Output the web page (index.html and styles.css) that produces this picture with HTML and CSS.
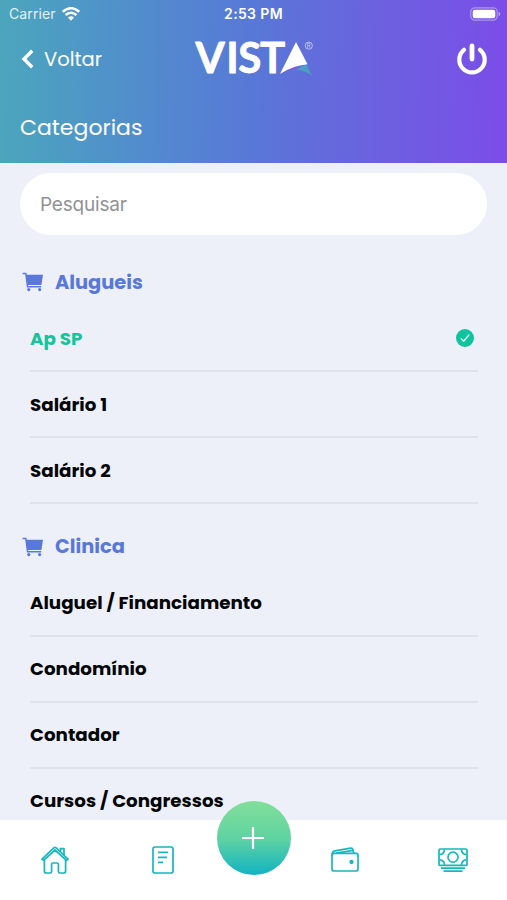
FILE: index.html
```
<!DOCTYPE html>
<html lang="pt-BR">
<head>
    <meta charset="UTF-8">
    <meta name="viewport" content="width=device-width, initial-scale=1.0">
    <title>Categorias</title>
    <link rel="stylesheet" href="styles.css">
</head>
<body>
    <svg width="0" height="0" class="sprite">
        <symbol id="cart" viewBox="0 0 22 20">
            <path d="M0.6 1.5H3.8L5.6 14.8H19.2" fill="none" stroke="currentColor" stroke-width="1.5"/>
            <path d="M4.2 2.8H21L19.4 13H5.6z" fill="currentColor"/>
            <circle cx="6.8" cy="17.6" r="1.6" fill="currentColor"/>
            <circle cx="17.6" cy="17.6" r="1.6" fill="currentColor"/>
        </symbol>
    </svg>

    <div class="app">
        <header class="header">
            <div class="status-bar">
                <div class="carrier">
                    <span class="carrier-name">Carrier</span>
                    <svg class="wifi" width="18" height="14" viewBox="0 0 18 14" fill="none" stroke="#fff" stroke-width="2.5">
                        <path d="M0.8 4.8Q9-2.4 17.2 4.8"/>
                        <path d="M3.6 8Q9 3.4 14.4 8"/>
                        <path d="M6 10.6Q9 8 12 10.6L9 13.7z" fill="#fff" stroke="none"/>
                    </svg>
                </div>
                <span class="time">2:53 PM</span>
                <svg class="battery" width="31" height="14" viewBox="0 0 31 14">
                    <rect x="0.8" y="0.8" width="26.4" height="12.4" rx="4" fill="none" stroke="#fff" stroke-opacity="0.4" stroke-width="1.2"/>
                    <rect x="2.7" y="2.7" width="22.6" height="8.6" rx="2.2" fill="#fff"/>
                    <path d="M28.6 4.8Q30.4 5.6 30.4 7T28.6 9.2z" fill="#fff" fill-opacity="0.5"/>
                </svg>
            </div>
            <div class="nav-bar">
                <a class="back">
                    <svg width="13" height="20" viewBox="0 0 13 20" fill="none" stroke="#fff" stroke-width="3.4">
                        <path d="M11.2 1.8L3 10L11.2 18.2"/>
                    </svg>
                    <span class="back-label">Voltar</span>
                </a>
                <svg class="logo" width="122" height="38" viewBox="0 0 122 38">
                    <text class="logo-text" x="2.6 33.2 45.2 67" y="33.4">VIST</text>
                    <path d="M113 24L119.5 36.5Q113 30.5 104 29.5Z" fill="#4c9fc4"/>
                    <path d="M88 34.5Q96 27.5 107 28L97 25Z" fill="#8b55df"/>
                    <path d="M103 2L114.5 24.2Q99 25.6 87 34Z" fill="#fff"/>
                    <circle cx="115.8" cy="5.6" r="3.6" fill="none" stroke="#fff" stroke-opacity="0.6" stroke-width="0.9"/>
                    <text class="logo-mark" x="113.8" y="7.8">R</text>
                </svg>
                <svg class="power" width="32" height="32" viewBox="0 0 32 32" fill="none" stroke="#fff" stroke-linecap="round">
                    <path d="M8 6.8A12.7 12.7 0 1 0 24 6.8" stroke-width="4.2"/>
                    <path d="M16 3V16" stroke-width="4.8"/>
                </svg>
            </div>
            <h1 class="page-title">Categorias</h1>
        </header>

        <main class="content">
            <input class="search" type="text" placeholder="Pesquisar">

            <section class="group">
                <h2 class="group-title"><svg class="cart"><use href="#cart"/></svg>Alugueis</h2>
                <ul class="list">
                    <li class="item selected">
                        Ap SP
                        <svg class="check" width="18" height="18" viewBox="0 0 18 18">
                            <circle cx="9" cy="9" r="9" fill="#0fc39d"/>
                            <path d="M4.8 9.3L7.8 12.3L13.2 5.5" fill="none" stroke="#d9fff5" stroke-width="1.4"/>
                        </svg>
                    </li>
                    <li class="item">Salário 1</li>
                    <li class="item">Salário 2</li>
                </ul>
            </section>

            <section class="group">
                <h2 class="group-title"><svg class="cart"><use href="#cart"/></svg>Clinica</h2>
                <ul class="list">
                    <li class="item">Aluguel / Financiamento</li>
                    <li class="item">Condomínio</li>
                    <li class="item">Contador</li>
                    <li class="item">Cursos / Congressos</li>
                </ul>
            </section>
        </main>

        <nav class="tab-bar">
            <a class="tab">
                <svg width="28" height="28" viewBox="0 0 28 28">
                    <path d="M1 13.2L12.8 1.8Q14 0.8 15.2 1.8L27 13.2L25.4 14.4L14 4L2.6 14.4Z"/>
                    <path d="M3.4 13.6V25Q3.4 27 5.2 27H9.2Q10.6 27 10.6 25.6V18.4Q10.6 17 12 17H16Q17.4 17 17.4 18.4V25.6Q17.4 27 18.8 27H22.8Q24.6 27 24.6 25V13.6M19.4 5.2V2.6H23V9"/>
                </svg>
            </a>
            <a class="tab">
                <svg width="22" height="28" viewBox="0 0 22 28">
                    <rect x="1" y="1" width="20" height="26" rx="2"/>
                    <path d="M6 6.4H16M6 11.4H15M6 16.4H11"/>
                </svg>
            </a>
            <a class="add">
                <svg width="24" height="24" viewBox="0 0 24 24"><path d="M12 1V23M1 12H23" stroke="#fff" stroke-width="2.2"/></svg>
            </a>
            <a class="tab wallet">
                <svg width="28" height="25" viewBox="0 0 28 25">
                    <rect x="1" y="6.4" width="26" height="17.6" rx="2"/>
                    <path d="M1.2 8.2Q0.8 4.5 4 3.8L19.6 1.1Q21.4 0.8 21.8 2.4L22.8 6.2M5.2 6.2L22.2 3.4"/>
                    <circle cx="20.5" cy="15" r="1.3" fill="currentColor"/>
                </svg>
            </a>
            <a class="tab">
                <svg width="30" height="25" viewBox="0 0 30 25">
                    <rect x="1" y="1" width="28" height="16.4" rx="1"/>
                    <circle cx="15" cy="9.2" r="5"/>
                    <path d="M1.6 6.6Q6 6.4 6.6 1.6M1.6 11.8Q6 12 6.6 16.8M28.4 6.6Q24 6.4 23.4 1.6M28.4 11.8Q24 12 23.4 16.8"/>
                    <path d="M3 20.2H27M5.5 23.2H24.5"/>
                </svg>
            </a>
        </nav>
    </div>
</body>
</html>
```
FILE: styles.css
```
:root {
    --background-color: #edf0f8;
    --text-color: #050608;
    --primary-color: #5878da;
    --accent-color: #18b7bd;
    --selected-color: #16c39b;
    --line-color: #dfe2e8;
}

* {
    box-sizing: border-box;
}

body {
    margin: 0;
    font-family: Poppins, Inter, "Open Sans", sans-serif;
    background-color: var(--background-color);
    color: var(--text-color);
}

.sprite {
    display: block;
}

.app {
    display: flex;
    flex-direction: column;
    height: 100vh;
    overflow: hidden;
}

/* Header */
.header {
    flex: none;
    height: 163px;
    color: #fff;
    background: linear-gradient(91deg, #4ba6bc 0%, #4f94c9 20%, #5878d7 50%, #6c60df 75%, #7b4de9 100%);
}

.status-bar {
    display: grid;
    grid-template-columns: 1fr auto 1fr;
    align-items: center;
    height: 27px;
    padding: 0 6px 0 9px;
    font-family: Inter, sans-serif;
    font-size: 14px;
}

.carrier {
    display: flex;
    align-items: center;
    gap: 6px;
}

.carrier-name {
    font-size: 14px;
    letter-spacing: 0.1px;
    opacity: 0.85;
}

.time {
    margin-right: 3px;
    font-weight: 600;
    letter-spacing: 0.35px;
}

.battery {
    justify-self: end;
}

.nav-bar {
    display: grid;
    grid-template-columns: 1fr auto 1fr;
    align-items: center;
    height: 64px;
    padding: 0 19px 0 21px;
}

.back {
    display: flex;
    align-items: center;
    gap: 10px;
}

.back-label {
    font-size: 19.5px;
}

.logo {
    margin-right: 1px;
    overflow: visible;
}

.logo-text {
    font-family: Lato, sans-serif;
    font-weight: 700;
    font-size: 42px;
    fill: #fff;
    stroke: #fff;
    stroke-width: 0.8;
    stroke-linejoin: round;
}

.logo-mark {
    font-family: Inter, sans-serif;
    font-size: 6px;
    fill: #fff;
    fill-opacity: 0.7;
}

.power {
    justify-self: end;
}

.page-title {
    margin: 20px 0 0 20px;
    font-size: 22px;
    font-weight: 400;
    line-height: 34px;
}

/* Categories */
.content {
    flex: 1;
    min-height: 0;
    overflow: hidden;
    padding: 10px 20px 0;
}

.search {
    display: block;
    width: 100%;
    height: 62px;
    margin-bottom: 5px;
    padding: 0 20px;
    border: none;
    border-radius: 31px;
    background: #fff;
    font-family: Inter, sans-serif;
    font-size: 19px;
    letter-spacing: -0.2px;
}

.search::placeholder {
    color: #929294;
}

.group-title {
    display: flex;
    align-items: center;
    gap: 11px;
    height: 66.1px;
    margin: 0;
    padding: 18.6px 2px 0;
    color: var(--primary-color);
    font-size: 19.4px;
    font-weight: 700;
}

.cart {
    width: 22px;
    height: 20px;
}

.list {
    list-style: none;
    margin: 0;
    padding: 0 9px 0 10px;
}

.item {
    display: flex;
    align-items: center;
    justify-content: space-between;
    height: 66.1px;
    border-bottom: 2px solid var(--line-color);
    font-size: 18.3px;
    font-weight: 700;
}

.selected {
    color: var(--selected-color);
}

.check {
    margin-right: 4px;
}

/* Bottom tabs */
.tab-bar {
    flex: none;
    display: grid;
    grid-template-columns: 109px 108px 74px 107px 109px;
    align-items: center;
    justify-items: center;
    height: 80px;
    background: #fff;
}

.tab {
    display: flex;
    color: var(--accent-color);
}

.tab svg {
    fill: none;
    stroke: currentColor;
    stroke-width: 1.7;
    stroke-linejoin: round;
}

.wallet {
    margin-bottom: 2px;
}

.add {
    display: flex;
    align-items: center;
    justify-content: center;
    width: 74px;
    height: 74px;
    margin-top: -44px;
    border-radius: 50%;
    background: linear-gradient(#82df9a 0%, #60d3a2 50%, #12b3c2 100%);
}

.add svg {
    margin-right: 3px;
}
```
